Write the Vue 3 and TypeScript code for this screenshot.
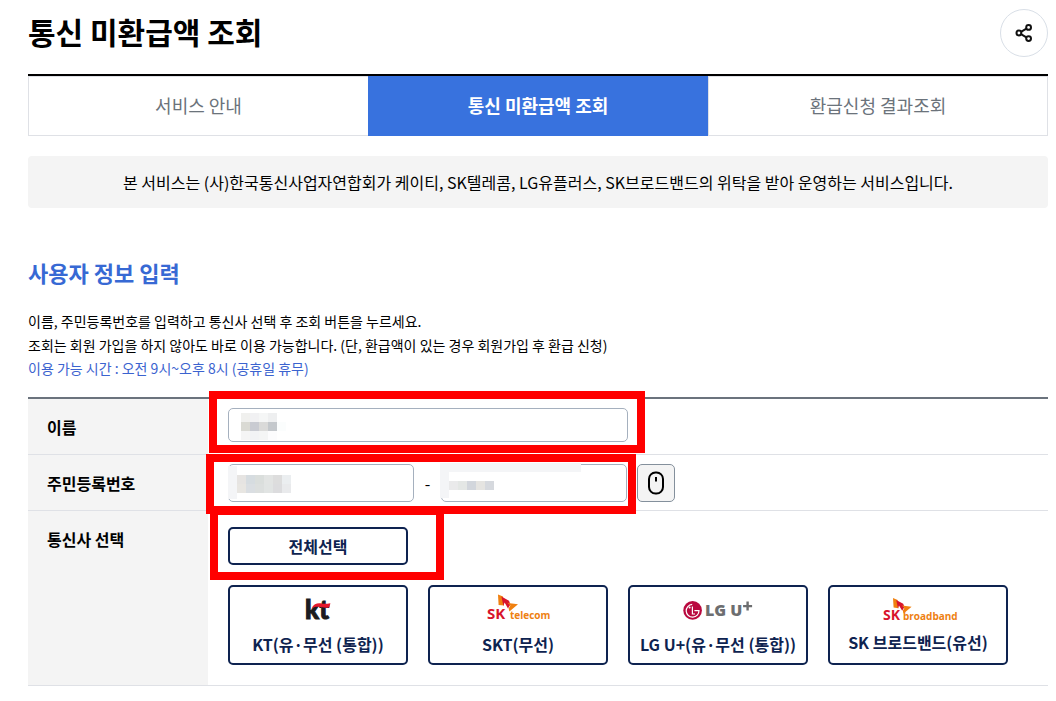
<script setup lang="ts">
import { ref } from 'vue'

interface Tab {
  id: string
  label: string
}

interface Carrier {
  id: string
  label: string
}

const tabs: Tab[] = [
  { id: 'guide', label: '서비스 안내' },
  { id: 'search', label: '통신 미환급액 조회' },
  { id: 'result', label: '환급신청 결과조회' },
]
const activeTab = ref<string>('search')

const carriers: Carrier[] = [
  { id: 'kt', label: 'KT(유·무선 (통합))' },
  { id: 'skt', label: 'SKT(무선)' },
  { id: 'lgu', label: 'LG U+(유·무선 (통합))' },
  { id: 'skb', label: 'SK 브로드밴드(유선)' },
]

const userName = ref<string>('')
const idFront = ref<string>('')
const idBack = ref<string>('')

// Mosaic cell colours that mask the personal data, row by row
const nameMask: string[] = [
  '#f0f0ee', '#f1f1f3', '#f5f6f6', '#eeeff0', '#ffffff',
  '#dadad4', '#c9cbd2', '#dadad9', '#c4c8cc', '#fbfdfd',
  '#f5f5f5', '#f2f3f5', '#f4f5f5', '#fcfcfd', '#ffffff',
]
const frontMask: string[] = [
  '#e6e4e2', '#d6dce0', '#dadedc', '#e2e4e3', '#dddddd', '#ebeef0',
  '#e8e6e2', '#dadee2', '#dcdfde', '#e1e4e3', '#dcdcde', '#e9eaec',
]
const backMask: string[] = ['#eaeaeb', '#e4e7e5', '#d2d6dc', '#e5e4e1', '#d6d9de']
</script>

<template>
  <main class="page">
    <header class="head">
      <h1 class="title">통신 미환급액 조회</h1>
      <button type="button" class="share" aria-label="공유하기">
        <svg width="20" height="20" viewBox="0 0 20 20" fill="none" stroke="#111" stroke-width="2" aria-hidden="true">
          <path d="M7 8.8 12.4 5.7M7 11.2 12.4 14.3" />
          <circle cx="4.9" cy="10" r="2.4" />
          <circle cx="14.6" cy="4.4" r="2.4" />
          <circle cx="14.6" cy="15.6" r="2.4" />
        </svg>
      </button>
    </header>

    <nav class="tabs">
      <a
        v-for="tab in tabs"
        :key="tab.id"
        href="#"
        class="tab"
        :class="{ active: tab.id === activeTab }"
        @click.prevent="activeTab = tab.id"
      >{{ tab.label }}</a>
    </nav>

    <p class="notice">본 서비스는 (사)한국통신사업자연합회가 케이티, SK텔레콤, LG유플러스, SK브로드밴드의 위탁을 받아 운영하는 서비스입니다.</p>

    <h2 class="subtitle">사용자 정보 입력</h2>
    <div class="guide">
      <p>이름, 주민등록번호를 입력하고 통신사 선택 후 조회 버튼을 누르세요.</p>
      <p>조회는 회원 가입을 하지 않아도 바로 이용 가능합니다. (단, 환급액이 있는 경우 회원가입 후 환급 신청)</p>
      <p class="hours">이용 가능 시간 : 오전 9시~오후 8시 (공휴일 휴무)</p>
    </div>

    <form class="form" @submit.prevent>
      <div class="row">
        <div class="cell-label"><label for="user-name">이름</label></div>
        <div class="cell name-cell">
          <div class="field name-field">
            <input id="user-name" v-model="userName" type="text" class="input" />
            <div class="mask name-mask" aria-hidden="true">
              <i v-for="(c, i) in nameMask" :key="i" :style="{ background: c }"></i>
            </div>
          </div>
          <div class="mark mark-name"></div>
        </div>
      </div>

      <div class="row">
        <div class="cell-label"><label for="id-front">주민등록번호</label></div>
        <div class="cell id-cell">
          <div class="field id-field">
            <input id="id-front" v-model="idFront" type="text" class="input" />
            <div class="veil veil-front"></div>
            <div class="mask front-mask" aria-hidden="true">
              <i v-for="(c, i) in frontMask" :key="i" :style="{ background: c }"></i>
            </div>
          </div>
          <span class="dash">-</span>
          <div class="field id-field">
            <input id="id-back" v-model="idBack" type="password" class="input" aria-label="주민등록번호 뒷자리" />
            <div class="veil veil-top"></div>
            <div class="veil veil-side"></div>
            <div class="mask back-mask" aria-hidden="true">
              <i v-for="(c, i) in backMask" :key="i" :style="{ background: c }"></i>
            </div>
          </div>
          <button type="button" class="mouse" aria-label="마우스 입력기">
            <svg width="18" height="24" viewBox="0 0 18 24" fill="none" stroke="#000" stroke-width="2" aria-hidden="true">
              <rect x="2" y="1.5" width="14" height="21" rx="6.5" />
              <path d="M9 6v4.5" />
            </svg>
          </button>
          <div class="mark mark-id"></div>
        </div>
      </div>

      <div class="row">
        <div class="cell-label"><span id="carrier-label">통신사 선택</span></div>
        <div class="cell carrier-cell" role="group" aria-labelledby="carrier-label">
          <button type="button" class="choice all">전체선택</button>
          <div class="carriers">
            <button v-for="carrier in carriers" :key="carrier.id" type="button" class="choice carrier">
              <svg v-if="carrier.id === 'kt'" class="logo" width="80" height="30" viewBox="0 0 80 30" aria-hidden="true">
                <text x="27" y="27" class="kt-word">kt</text>
                <path d="M33.6 16.4C35.6 12 39.4 10.8 43.4 11.6C46.6 12 49.6 11.6 52.4 11.2L51.4 15.2C47.4 16.4 44 15.4 40.6 14.8C38 14.4 35.6 15 33.6 16.4Z" fill="#e6192d" />
              </svg>
              <svg v-else-if="carrier.id === 'skt'" class="logo" width="80" height="30" viewBox="0 0 80 30" aria-hidden="true">
                <path d="M20 2.4 25 4.6 26 13.6 20.6 13Z" fill="#f08010" />
                <path d="M23.4 4.6 31 8.8 32.4 12.4 30 16.6 26.6 10.6 25.4 14Z" fill="#d8142c" />
                <path d="M29.4 10.8 40 12.2 31.4 19.6 30.6 16.6 32.4 13.6Z" fill="#f08010" />
                <text x="9" y="27" class="sk-word sk-large">SK</text>
                <text x="32" y="27" class="sk-unit">telecom</text>
              </svg>
              <svg v-else-if="carrier.id === 'lgu'" class="logo" width="80" height="30" viewBox="0 0 80 30" aria-hidden="true">
                <circle cx="14.6" cy="18.4" r="9.3" fill="#b9093f" />
                <path d="M14.2 12.4A6.4 6.4 0 1 0 21 18.6H16.4M14.4 14.4V22H17" fill="none" stroke="#fff" stroke-width="1.2" />
                <circle cx="11.6" cy="15.6" r="1" fill="#fff" />
                <text x="27" y="24" class="lg-word">LG U</text>
                <path d="M69.6 9.6V18.6M65.1 14.1H74.1" stroke="#6d6e70" stroke-width="2.4" />
              </svg>
              <svg v-else class="logo" width="80" height="28" viewBox="0 0 80 28" aria-hidden="true">
                <path d="M15 6 19.6 8 20.4 16.2 15.6 15.6Z" fill="#f08010" />
                <path d="M18.2 8 25.2 11.8 26.4 15 24.2 18.8 21 13.4 20 16.4Z" fill="#d8142c" />
                <path d="M23.8 13.6 33.6 14.8 25.6 21.4 24.8 18.8 26.4 16Z" fill="#f08010" />
                <text x="5" y="28" class="sk-word sk-small">SK</text>
                <text x="25" y="28" class="sk-unit">broadband</text>
              </svg>
              <span class="carrier-name">{{ carrier.label }}</span>
            </button>
          </div>
          <div class="mark mark-all"></div>
        </div>
      </div>
    </form>
  </main>
</template>

<style>
body {
  background: #fff;
}
</style>

<style scoped>
.page {
  padding: 9px 8px 15px 28px;
  color: #000;
  font-family: "Noto Sans CJK KR", sans-serif;
  font-size: 16px;
  line-height: 24px;
}

h1,
h2,
p {
  margin: 0;
}

button,
input {
  box-sizing: border-box;
  font: inherit;
}

.head {
  display: flex;
  justify-content: space-between;
  align-items: flex-start;
  margin-bottom: 17px;
}

.title {
  font-size: 30px;
  line-height: 44px;
  font-weight: 700;
}

.share {
  display: flex;
  align-items: center;
  justify-content: center;
  width: 48px;
  height: 48px;
  padding: 0;
  border: 1px solid #d9dfe7;
  border-radius: 50%;
  background: #fff;
}

.tabs {
  display: grid;
  grid-template-columns: repeat(3, 1fr);
  border-top: 2px solid #000;
}

.tab {
  box-sizing: border-box;
  height: 60px;
  border: 1px solid #dfe1e6;
  color: #6b737b;
  font-size: 18px;
  line-height: 56px;
  text-align: center;
  text-decoration: none;
}

.tab:first-child {
  border-right: 0;
}

.tab.active {
  border-color: #3872de;
  background: #3872de;
  color: #fff;
  font-weight: 700;
}

.notice {
  margin-top: 20px;
  padding: 14px 20px;
  border-radius: 4px;
  background: #f4f4f4;
  text-align: center;
}

.subtitle {
  margin-top: 48px;
  color: #3769d4;
  font-size: 22px;
  line-height: 32px;
  font-weight: 700;
}

.guide {
  margin-top: 21px;
  font-size: 14px;
  line-height: 24px;
}

.guide .hours {
  color: #3b63cf;
  line-height: 22px;
}

.form {
  margin-top: 18px;
  border-top: 2px solid #6b737d;
}

.row {
  display: grid;
  grid-template-columns: 180px 1fr;
  border-bottom: 1px solid #dfe1e6;
}

.cell-label {
  padding: 16px 19px 15px;
  background: #f4f4f4;
  font-weight: 700;
}

.cell {
  position: relative;
  padding: 0 20px;
}

.name-cell {
  padding-top: 9px;
}

.id-cell {
  display: flex;
  align-items: center;
  padding-top: 9px;
  padding-bottom: 8px;
}

.carrier-cell {
  padding-top: 16px;
  padding-bottom: 20px;
}

.field {
  position: relative;
}

.name-field {
  max-width: 400px;
  height: 34px;
}

.id-field {
  width: 186px;
  height: 38px;
}

.input {
  display: block;
  width: 100%;
  height: 100%;
  padding: 0 12px;
  border: 1px solid #a5b0be;
  border-radius: 5px;
  background: #fff;
}

.dash {
  width: 27px;
  text-align: center;
}

.mouse {
  display: flex;
  align-items: center;
  justify-content: center;
  width: 38px;
  height: 38px;
  margin-left: 10px;
  padding: 0;
  border: 1px solid #84909c;
  border-radius: 5px;
  background: #f4f4f4;
}

/* Mosaic over the typed values */
.mask {
  position: absolute;
  display: grid;
  grid-auto-rows: 9px;
}

.name-mask {
  top: 5px;
  left: 13px;
  grid-template-columns: repeat(5, 9px);
}

.front-mask {
  top: 11px;
  left: 9px;
  grid-template-columns: repeat(6, 9px);
}

.back-mask {
  top: 17px;
  left: 8px;
  grid-template-columns: repeat(5, 9px);
}

.veil {
  position: absolute;
  background: #f4f5f7;
}

.veil-front {
  top: 2px;
  left: 0;
  width: 9px;
  height: 33px;
}

.veil-top {
  top: -1px;
  left: -1px;
  width: 141px;
  height: 9px;
}

.veil-side {
  top: -1px;
  left: -1px;
  width: 9px;
  height: 35px;
}

/* Red highlight frames */
.mark {
  position: absolute;
  z-index: 1;
  box-sizing: border-box;
  border: 8px solid #f00;
  pointer-events: none;
}

.mark-name {
  top: -8px;
  left: 1px;
  width: 436px;
  height: 62px;
}

.mark-id {
  top: -1px;
  left: -2px;
  width: 430px;
  height: 60px;
}

.mark-all {
  top: -4px;
  left: 2px;
  width: 234px;
  height: 73px;
}

.choice {
  border: 2px solid #0e2350;
  border-radius: 5px;
  background: #fff;
  color: #0e2350;
  font-weight: 700;
}

.all {
  display: block;
  width: 180px;
  height: 38px;
  padding: 0;
}

.carriers {
  display: flex;
  flex-wrap: wrap;
  gap: 20px;
  margin-top: 20px;
}

.carrier {
  display: flex;
  flex-direction: column;
  align-items: center;
  width: 180px;
  height: 80px;
  padding: 5px 0 0;
}

.carrier-name {
  margin-top: 10px;
  white-space: nowrap;
}

.logo {
  display: block;
  overflow: visible;
}

.kt-word {
  font: 900 26px Lato, sans-serif;
  fill: #1c1c1e;
  stroke: #1c1c1e;
  stroke-width: 1px;
}

.sk-word {
  font-family: "Open Sans", sans-serif;
  font-weight: 700;
  fill: #d8142c;
}

.sk-large {
  font-size: 15px;
}

.sk-small {
  font-size: 14px;
}

.sk-unit {
  font: 700 10px "Open Sans", sans-serif;
  fill: #ee8112;
}

.lg-word {
  font: 800 16px "Open Sans", sans-serif;
  fill: #6d6e70;
}
</style>
